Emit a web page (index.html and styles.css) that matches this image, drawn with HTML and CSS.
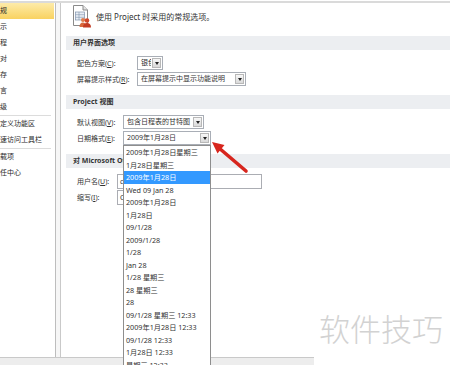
FILE: index.html
```html
<!DOCTYPE html>
<html lang="zh-CN">
<head>
  <meta charset="UTF-8">
  <title>Project 选项</title>
  <link rel="stylesheet" href="styles.css">
</head>
<body>

<div class="topline"></div>
<div class="panes">
  <ul class="nav">
    <li class="active"><span>常规</span></li>
    <li><span>显示</span></li>
    <li><span>日程</span></li>
    <li><span>校对</span></li>
    <li><span>保存</span></li>
    <li><span>语言</span></li>
    <li><span>高级</span></li>
    <li class="sep"></li>
    <li><span>自定义功能区</span></li>
    <li><span>快速访问工具栏</span></li>
    <li class="sep"></li>
    <li><span>加载项</span></li>
    <li><span>信任中心</span></li>
  </ul>
  <div class="gutter"></div>
  <div class="main">
    <div class="intro">
      <svg class="intro-icon" width="20" height="24" viewBox="0 0 20 24">
        <path d="M1.5 1.5 H11 L15.5 6 V21.5 H1.5 Z" fill="#fff" stroke="#8a8a8a"/>
        <path d="M11 1.5 V6 H15.5" fill="#e4e4e4" stroke="#8a8a8a"/>
        <rect x="3.5" y="8" width="9" height="8" fill="#e9eef5" stroke="#7f93ad" stroke-width="0.7"/>
        <path d="M3.5 10.7 H12.5 M3.5 13.3 H12.5 M7 8 V16" stroke="#7f93ad" stroke-width="0.6"/>
        <circle cx="11" cy="16" r="2" fill="#e07a4a"/>
        <path d="M7.5 23 Q7.5 18.5 11 18.5 Q14 18.5 14 23 Z" fill="#d8683c"/>
        <circle cx="15" cy="16.5" r="2.3" fill="#d2472a"/>
        <path d="M11 23.5 Q11 19 15 19 Q19 19 19 23.5 Z" fill="#c33a22"/>
      </svg>
      <span>使用 Project 时采用的常规选项。</span>
    </div>

    <div class="section-title">用户界面选项</div>
    <div class="fields fields-ui">
      <div class="field">
        <label>配色方案(<u>C</u>):</label>
        <div class="select w-color"><span class="value">银色</span><span class="drop"></span></div>
      </div>
      <div class="field">
        <label>屏幕提示样式(<u>R</u>):</label>
        <div class="select w-tip"><span class="value">在屏幕提示中显示功能说明</span><span class="drop"></span></div>
      </div>
    </div>

    <div class="section-title">Project 视图</div>
    <div class="fields fields-view">
      <div class="field">
        <label>默认视图(<u>V</u>):</label>
        <div class="select w-view"><span class="value">包含日程表的甘特图</span><span class="drop"></span></div>
      </div>
      <div class="field">
        <label>日期格式(<u>E</u>):</label>
        <div class="select w-date"><span class="value">2009年1月28日</span><span class="drop"></span></div>
      </div>
    </div>

    <div class="section-title">对 Microsoft Office 进行个性化设置</div>
    <div class="fields fields-user">
      <div class="field">
        <label>用户名(<u>U</u>):</label>
        <div class="textbox w-user">cw</div>
      </div>
      <div class="field">
        <label>缩写(<u>I</u>):</label>
        <div class="textbox w-initials">C</div>
      </div>
    </div>
  </div>
</div>
<div class="statusbar"></div>

<ul class="date-list">
  <li>2009年1月28日星期三</li>
  <li>1月28日星期三</li>
  <li class="selected">2009年1月28日</li>
  <li>Wed 09 Jan 28</li>
  <li>2009年1月28日</li>
  <li>1月28日</li>
  <li>09/1/28</li>
  <li>2009/1/28</li>
  <li>1/28</li>
  <li>Jan 28</li>
  <li>1/28 星期三</li>
  <li>28 星期三</li>
  <li>28</li>
  <li>09/1/28 星期三 12:33</li>
  <li>2009年1月28日 12:33</li>
  <li>09/1/28 12:33</li>
  <li>1月28日 12:33</li>
  <li>星期三 12:33</li>
</ul>

<svg class="arrow" width="50" height="45" viewBox="0 0 50 45">
  <path d="M14 13 L41 36" stroke="#d7261e" stroke-width="3.6" stroke-linecap="round"/>
  <path d="M7 7 L19.5 10 L12.5 18.5 Z" fill="#d7261e"/>
</svg>

<div class="watermark">软件技巧</div>

</body>
</html>
```

FILE: styles.css
```css
html, body {
  margin: 0;
  height: 365px;
  overflow: hidden;
}

body {
  position: relative;
  width: 450px;
  background: #fff;
  font-family: "Noto Sans", "Noto Sans CJK SC", sans-serif;
  font-size: 7px;
  color: #333;
}

.topline {
  height: 2px;
  margin-top: 1px;
  background: #dadada;
}

.panes {
  display: flex;
  height: 354px;
}

/* left navigation */
.nav {
  list-style: none;
  margin: 0;
  padding: 0;
  width: 55px;
  border-right: 1px solid #bdbdbd;
  overflow: hidden;
  background: #fff;
}

.nav li {
  height: 16px;
  line-height: 16px;
  white-space: nowrap;
  color: #2a2a2a;
}

.nav li span {
  margin-left: -7px;
}

.nav .active {
  margin-right: 1px;
  background: linear-gradient(#fdeba9, #f9d260);
}

.nav .sep {
  height: 1px;
  margin-right: 4px;
  background: #dcdcdc;
}

.gutter {
  width: 4px;
  background: #f6f6f6;
}

/* right pane */
.main {
  flex: 1;
  border-left: 1px solid #c9c9c9;
  padding-left: 5px;
}

.intro {
  display: flex;
  align-items: center;
  gap: 4px;
  height: 26px;
  margin-bottom: 7px;
  padding-left: 6px;
  font-size: 8px;
}

.section-title {
  height: 14px;
  line-height: 14px;
  padding-left: 7px;
  background: #eceef1;
  font-weight: bold;
  color: #333;
}

.fields {
  display: flex;
  flex-direction: column;
  gap: 2px;
  padding: 6px 0 9px 11px;
}

.field {
  display: flex;
  align-items: center;
  height: 14px;
}

.field label {
  flex: none;
}

.fields-ui label { width: 60px; }
.fields-view label { width: 46px; }
.fields-user label { width: 40px; }

.select {
  display: flex;
  box-sizing: border-box;
  height: 14px;
  border: 1px solid #a9aeb6;
  background: #fff;
}

.select .value {
  flex: 1;
  padding-left: 3px;
  line-height: 12px;
  white-space: nowrap;
  overflow: hidden;
}

.select .drop {
  display: flex;
  align-items: center;
  justify-content: center;
  box-sizing: border-box;
  width: 9px;
  margin: 1px;
  border: 1px solid #b8b8b8;
  background: linear-gradient(#f8f8f8, #d9d9d9);
}

.select .drop::after {
  content: "";
  border-left: 2px solid transparent;
  border-right: 2px solid transparent;
  border-top: 3px solid #222;
}

.w-color { width: 26px; }
.w-tip { width: 109px; }
.w-view { width: 81px; }
.w-date { width: 88px; }

.textbox {
  box-sizing: border-box;
  height: 15px;
  line-height: 13px;
  padding-left: 2px;
  border: 1px solid #abadb3;
  background: #fff;
}

.w-user { width: 145px; }
.w-initials { width: 80px; }

.statusbar {
  width: 314px;
  height: 8px;
  border-top: 1px solid #c9c9c9;
  background: #ededed;
}

/* open date format list */
.date-list {
  position: absolute;
  left: 123px;
  top: 145px;
  width: 86px;
  height: 230px;
  margin: 0;
  padding: 0;
  list-style: none;
  border: 1px solid #8e8e8e;
  background: #fff;
}

.date-list li {
  height: 12.5px;
  line-height: 12.5px;
  padding-left: 2px;
  white-space: nowrap;
  font-size: 7.2px;
}

.date-list .selected {
  background: #3399ff;
  color: #fff;
}

.arrow {
  position: absolute;
  left: 205px;
  top: 135px;
}

.watermark {
  position: absolute;
  left: 319px;
  top: 312px;
  font-family: "Noto Sans CJK SC", sans-serif;
  font-size: 31px;
  font-weight: 300;
  line-height: 1;
  color: #d2d2d2;
}
```
